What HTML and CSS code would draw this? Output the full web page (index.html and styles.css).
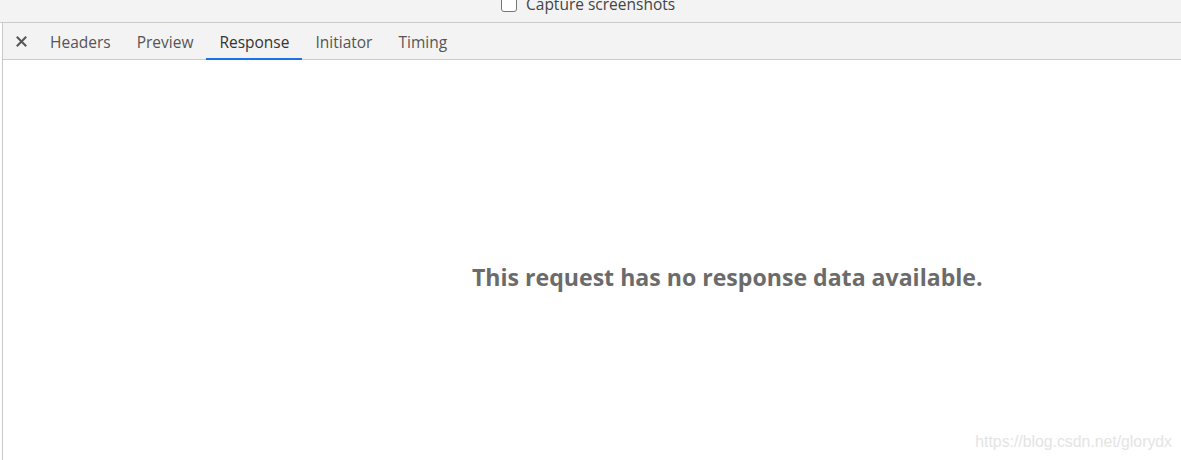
FILE: index.html
```html
<!DOCTYPE html>
<html>
<head>
<meta charset="utf-8">
<link rel="stylesheet" href="styles.css">
</head>
<body>
<div class="page">
  <div class="topbar">
    <label class="capture"><span class="checkbox"></span><span class="capture-text">Capture screenshots</span></label>
  </div>
  <div class="panel">
    <div class="tabs">
      <span class="close">
        <svg width="11" height="11" viewBox="0 0 11 11"><path d="M1.5 1.5 L9.5 9.5 M9.5 1.5 L1.5 9.5" stroke="#555" stroke-width="2" stroke-linecap="square"/></svg>
      </span>
      <span class="tab">Headers</span>
      <span class="tab">Preview</span>
      <span class="tab active">Response</span>
      <span class="tab">Initiator</span>
      <span class="tab">Timing</span>
    </div>
    <div class="content">
      <div class="empty">This request has no response data available.</div>
    </div>
  </div>
  <div class="watermark">https://blog.csdn.net/glorydx</div>
</div>
</body>
</html>
```

FILE: styles.css
```css
html, body {
  margin: 0;
  padding: 0;
  background: #fff;
}
.page {
  position: relative;
  width: 1181px;
  height: 460px;
  overflow: hidden;
  font-family: "Open Sans", "Noto Sans", sans-serif;
}
.topbar {
  height: 22px;
  background: #f3f3f3;
  border-bottom: 1px solid #cbcbcb;
  display: flex;
  align-items: flex-end;
  padding-left: 501px;
  box-sizing: content-box;
}
.capture {
  display: flex;
  align-items: center;
  gap: 9px;
  height: 22px;
  margin-bottom: 7px;
}
.checkbox {
  width: 14px;
  height: 14px;
  border: 1px solid #767676;
  border-radius: 3px;
  background: #fff;
}
.capture-text {
  font-size: 15.5px;
  color: #444;
}
.panel {
  height: 437px;
  border-left: 1px solid #c8c8c8;
  margin-left: 2px;
  display: flex;
  flex-direction: column;
}
.tabs {
  height: 36px;
  background: #f3f3f3;
  border-bottom: 1px solid #cbcbcb;
  display: flex;
  align-items: stretch;
  flex: none;
}
.close {
  width: 32px;
  display: flex;
  align-items: center;
  justify-content: center;
  padding-left: 2px;
}
.tab {
  display: flex;
  align-items: center;
  padding: 2px 13px 0;
  margin-bottom: -1px;
  font-size: 15.5px;
  color: #555;
  border-bottom: 2px solid transparent;
}
.tab.active {
  color: #333;
  border-bottom-color: #1a73e8;
}
.content {
  flex: 1;
  display: flex;
  align-items: flex-start;
  padding-top: 201px;
  padding-left: 469px;
}
.empty {
  font-size: 23.1px;
  font-weight: 700;
  color: #6b6b6b;
}
.watermark {
  position: absolute;
  right: 9px;
  bottom: 9px;
  font-family: "Liberation Sans", Arial, sans-serif;
  font-size: 15.8px;
  color: #e4e4e4;
}
```
